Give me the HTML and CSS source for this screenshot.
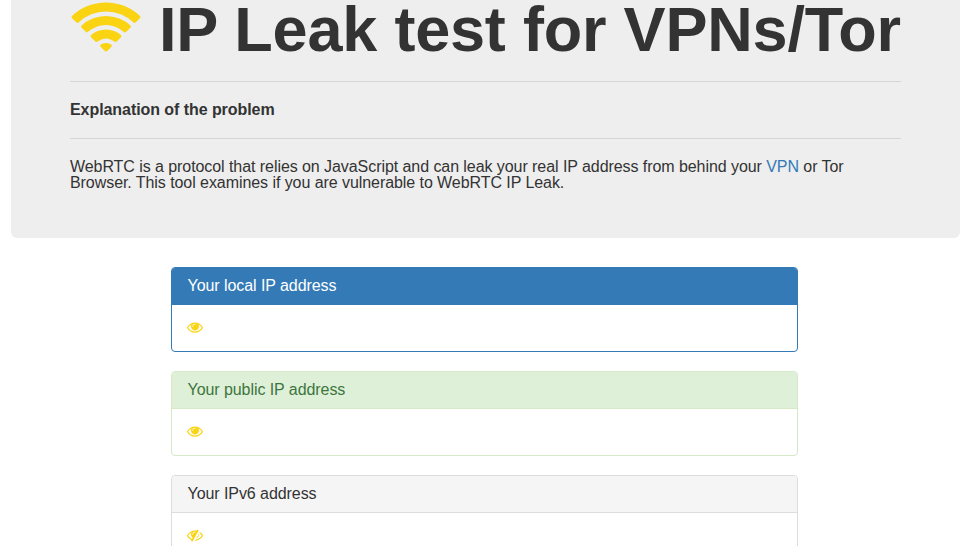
FILE: index.html
```html
<!DOCTYPE html>
<html lang="en">
<head>
    <meta charset="utf-8">
    <title>IP Leak test for VPNs/Tor</title>
    <link rel="stylesheet" href="styles.css">
</head>
<body>
    <svg class="sprite">
        <symbol id="eye" viewBox="0 0 1792 1792"><path d="M1664 960q-152-236-381-353 61 104 61 225 0 185-131.500 316.500t-316.500 131.500-316.500-131.500-131.500-316.500q0-121 61-225-229 117-381 353 133 205 333.500 326.500t434.500 121.500 434.500-121.500 333.500-326.500zm-720-384q0-20-14-34t-34-14q-125 0-214.500 89.500t-89.500 214.500q0 20 14 34t34 14 34-14 14-34q0-86 61-147t147-61q20 0 34-14t14-34zm848 384q0 34-20 69-140 230-376.500 368.500t-499.500 138.500-499.500-139-376.500-368q-20-35-20-69t20-69q140-229 376.500-368t499.500-139 499.500 139 376.500 368q20 35 20 69z"/></symbol>
    </svg>

    <div class="jumbotron">
        <h1>
            <svg class="wifi" viewBox="0 0 2048 1792"><path d="M1024 1523q-20 0-93-73.500t-73-93.500q0-32 62.500-54t103.500-22 103.500 22 62.500 54q0 20-73 93.500t-93 73.500zm270-270q-2 0-40-25t-101.500-50-128.500-25-128.500 25-101 50-40.500 25q-18 0-93.500-75t-75.500-93q0-13 10-23 78-77 196-121t233-44 233 44 196 121q10 10 10 23 0 18-75.500 93t-93.500 75zm273-272q-11 0-23-8-136-105-252-154.500t-268-49.500q-85 0-170.500 22t-149 53-113.500 62-79 53-31 22q-17 0-92-75t-75-93q0-12 10-22 132-132 320-205t380-73 380 73 320 205q10 10 10 22 0 18-75 93t-92 75zm271-271q-11 0-22-9-179-157-371.500-236.500t-420.500-79.500-420.500 79.500-371.500 236.500q-11 9-22 9-17 0-92.500-75t-75.500-93q0-13 10-23 187-186 445-288t527-102 527 102 445 288q10 10 10 23 0 18-75.500 93t-92.500 75z"/></svg>
            <span>IP Leak test for VPNs/Tor</span>
        </h1>
        <hr>
        <h2>Explanation of the problem</h2>
        <hr>
        <p>WebRTC is a protocol that relies on JavaScript and can leak your real IP address from behind your <a href="#">VPN</a> or Tor<br>Browser. This tool examines if you are vulnerable to WebRTC IP Leak.</p>
    </div>

    <div class="container">
        <div class="panel panel-primary">
            <div class="panel-heading">Your local IP address</div>
            <div class="panel-body"><svg class="icon"><use href="#eye"/></svg></div>
        </div>
        <div class="panel panel-success">
            <div class="panel-heading">Your public IP address</div>
            <div class="panel-body"><svg class="icon"><use href="#eye"/></svg></div>
        </div>
        <div class="panel panel-default">
            <div class="panel-heading">Your IPv6 address</div>
            <div class="panel-body"><svg class="icon" viewBox="0 0 1792 1792"><path d="M555 1335l78-141q-87-63-136-159t-49-203q0-121 61-225-229 117-381 353 167 258 427 375zm389-759q0-20-14-34t-34-14q-125 0-214.500 89.500t-89.500 214.500q0 20 14 34t34 14 34-14 14-34q0-86 61-147t147-61q20 0 34-14t14-34zm363-191q0 7-1 9-106 189-316 567t-315 566l-49 89q-10 16-28 16-12 0-134-70-16-10-16-28 0-12 44-87-143-65-263.500-173t-208.500-245q-20-31-20-69t20-69q153-235 380-371t496-136q89 0 180 17l54-97q10-16 28-16 5 0 18 6t31 15.500 33 18.500 31.500 18.500 19.500 11.500q16 10 16 27zm37 447q0 139-79 253.500t-209 164.500l280-502q8 45 8 84zm448 128q0 35-20 69-39 64-109 145-150 172-347.500 267t-419.500 95l74-132q212-18 392.500-137t301.500-307q-115-179-282-294l63-112q95 64 182.500 153t144.500 184q20 34 20 69z"/></svg></div>
        </div>
    </div>
</body>
</html>
```

FILE: styles.css
```css
* {
    box-sizing: border-box;
}

html {
    overflow: hidden;
}

body {
    height: 546px;
    margin: 0;
    padding: 0 10px 0 11px;
    overflow: hidden;
    font-family: "Liberation Sans", Arial, sans-serif;
    font-size: 16px;
    line-height: 16px;
    letter-spacing: -0.065px;
    color: #333;
    background-color: #fff;
}

.sprite {
    display: none;
}

.jumbotron {
    height: 238px;
    padding: 0 59px;
    margin-bottom: 29px;
    background-color: #eee;
    border-radius: 0 0 6px 6px;
}

h1 {
    display: flex;
    height: 81px;
    margin: 0;
    font-size: 63px;
    line-height: 58px;
    letter-spacing: -0.2px;
    white-space: nowrap;
}

.wifi {
    flex: none;
    width: 72px;
    height: 63px;
    margin: -2px 17.5px 0 -0.5px;
    fill: #fad312;
}

hr {
    height: 1px;
    margin: 0;
    border: 0;
    background-color: #d5d5d5;
}

h2 {
    margin: 0;
    padding: 20px 0;
    font-size: 16px;
    line-height: 16px;
}

p {
    margin: 20px 0 0;
    white-space: nowrap;
}

a {
    color: #337ab7;
    text-decoration: none;
}

.container {
    width: 627px;
    margin-left: 160px;
}

.panel {
    height: 85px;
    margin-bottom: 19px;
    border: 1px solid #ddd;
    border-radius: 4px;
}

.panel-heading {
    height: 37px;
    padding: 10px 15.5px;
    border-bottom: 1px solid #ddd;
    border-radius: 3px 3px 0 0;
    background-color: #f5f5f5;
}

.panel-body {
    padding: 14px 15.4px;
}

.panel-primary,
.panel-primary .panel-heading {
    border-color: #337ab7;
}

.panel-primary .panel-heading {
    color: #fff;
    background-color: #337ab7;
}

.panel-success,
.panel-success .panel-heading {
    border-color: #d6e9c6;
}

.panel-success .panel-heading {
    color: #3c763d;
    background-color: #dff0d8;
}

.icon {
    display: block;
    width: 16px;
    height: 16px;
    fill: #fad312;
}
```
